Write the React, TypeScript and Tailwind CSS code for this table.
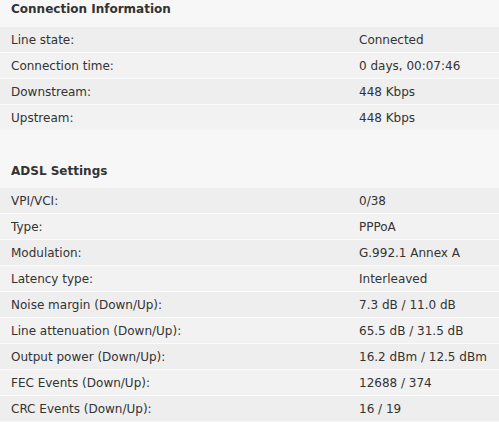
import React from "react";

const conn: [string, string][] = [
  ["Line state:", "Connected"],
  ["Connection time:", "0 days, 00:07:46"],
  ["Downstream:", "448 Kbps"],
  ["Upstream:", "448 Kbps"],
];

const adsl: [string, string][] = [
  ["VPI/VCI:", "0/38"],
  ["Type:", "PPPoA"],
  ["Modulation:", "G.992.1 Annex A"],
  ["Latency type:", "Interleaved"],
  ["Noise margin (Down/Up):", "7.3 dB / 11.0 dB"],
  ["Line attenuation (Down/Up):", "65.5 dB / 31.5 dB"],
  ["Output power (Down/Up):", "16.2 dBm / 12.5 dBm"],
  ["FEC Events (Down/Up):", "12688 / 374"],
  ["CRC Events (Down/Up):", "16 / 19"],
];

function Rows({ rows }: { rows: [string, string][] }) {
  return (
    <div className="flex flex-col gap-px bg-[#fbfbfb]">
      {rows.map(([l, v], i) => (
        <div
          key={l}
          className={`flex h-[25px] items-center pl-[11px] ${i % 2 === 0 ? "bg-[#eeeeee]" : "bg-[#f2f2f2]"}`}
        >
          <div className="w-[348px]">{l}</div>
          <div>{v}</div>
        </div>
      ))}
    </div>
  );
}

export default function App() {
  return (
    <div
      className="w-[499px] h-[422px] overflow-hidden bg-[#f7f7f7] text-[#333333] text-[12px] leading-none"
      style={{ fontFamily: '"DejaVu Sans", Verdana, sans-serif' }}
    >
      <div className="h-[26px] pl-[11px] pt-[3px] font-bold">Connection Information</div>
      <div className="pt-px">
        <Rows rows={conn} />
      </div>
      <div className="h-[58px] pl-[11px] pt-[35px] font-bold">ADSL Settings</div>
      <Rows rows={adsl} />
    </div>
  );
}
